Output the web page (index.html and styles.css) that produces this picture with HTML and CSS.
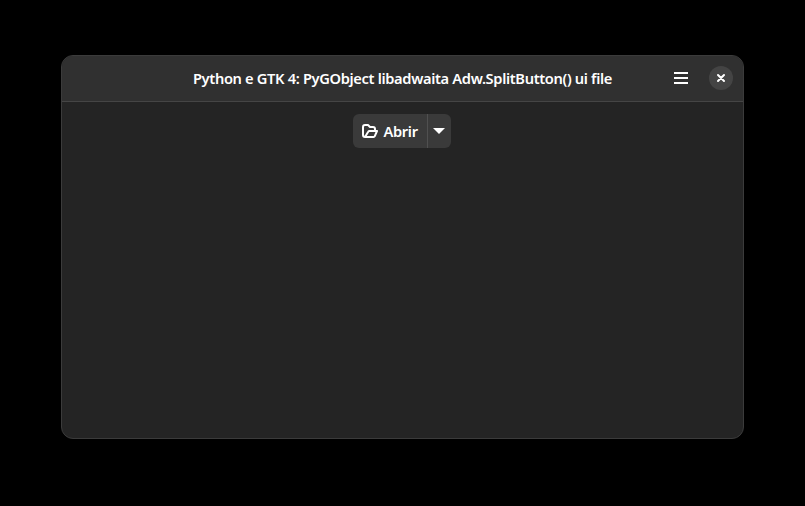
FILE: index.html
```html
<!DOCTYPE html>
<html lang="pt-BR">
<head>
<meta charset="utf-8">
<title>Adw.SplitButton</title>
<link rel="stylesheet" href="styles.css">
</head>
<body>
<main class="window">
  <header class="headerbar">
    <h1 class="title">Python e GTK 4: PyGObject libadwaita Adw.SplitButton() ui file</h1>
    <div class="controls">
      <button class="menu" aria-label="Menu"><svg width="16" height="16" viewBox="0 0 16 16"><path d="M1 2h14v2H1zM1 7h14v2H1zM1 12h14v2H1z" fill="#fff"/></svg></button>
      <button class="close" aria-label="Fechar"><svg width="16" height="16" viewBox="0 0 16 16"><path d="M5 5l6 6M11 5l-6 6" stroke="#fff" stroke-width="2" stroke-linecap="round"/></svg></button>
    </div>
  </header>
  <section class="content">
    <div class="split">
      <button class="action">
        <svg width="16" height="16" viewBox="0 0 16 16" fill="none" stroke="#fff" stroke-width="2" stroke-linejoin="round"><path d="M13 7V6a2 2 0 0 0-2-2H8L6 2H3a2 2 0 0 0-2 2v8a2 2 0 0 0 2 2h8.5a1.5 1.5 0 0 0 1.3-.9L15 8H7.5a1.5 1.5 0 0 0-1.3.8L3 14"/></svg>
        <span>Abrir</span>
      </button>
      <button class="dropdown" aria-label="Mais"><svg width="16" height="16" viewBox="0 0 16 16"><path d="M2 5h12l-6 6z" fill="#fff"/></svg></button>
    </div>
  </section>
</main>
</body>
</html>
```
FILE: styles.css
```css
* { box-sizing: border-box; }
body {
  margin: 0;
  height: 506px;
  padding: 55px 61px 67px;
  background: #000;
  color: #fff;
  font: 600 14.67px/20px "Noto Sans", sans-serif;
  letter-spacing: -0.345px;
}
.window {
  height: 384px;
  display: flex;
  flex-direction: column;
  border: 1px solid #3b3b3b;
  border-radius: 12px;
  background: #242424;
  overflow: hidden;
}
.headerbar {
  height: 46px;
  flex: none;
  display: grid;
  grid-template-columns: 1fr auto 1fr;
  align-items: center;
  padding-bottom: 2px;
  background: #303030;
  border-bottom: 1px solid #454545;
}
.title { grid-column: 2; margin: 0; font: inherit; white-space: nowrap; }
.controls { display: flex; justify-content: flex-end; align-items: center; gap: 12px; padding-right: 10px; }
button { margin: 0; padding: 0; border: 0; color: inherit; font: inherit; letter-spacing: inherit; background: none; display: flex; align-items: center; justify-content: center; }
svg { display: block; flex: none; }
.menu { width: 32px; height: 34px; }
.close { width: 24px; height: 24px; border-radius: 50%; background: #444; }
.content { flex: 1; display: flex; justify-content: center; align-items: flex-start; padding: 12px 2px 0 0; }
.split { display: flex; height: 34px; border-radius: 6px; background: #3a3a3a; overflow: hidden; }
.action { width: 74px; height: 34px; gap: 6px; justify-content: flex-start; padding-left: 9px; }
.dropdown { width: 24px; height: 34px; border-left: 1px solid #505050; }
```
